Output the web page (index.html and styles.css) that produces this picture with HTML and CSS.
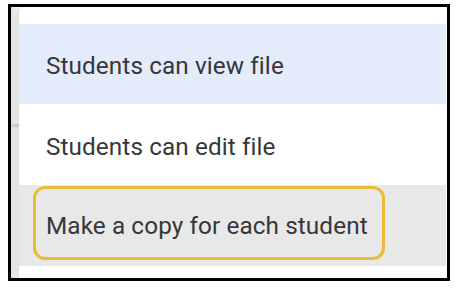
FILE: index.html
```html
<!DOCTYPE html>
<html lang="en">
<head>
  <meta charset="UTF-8" />
  <title>Share options</title>
  <link rel="stylesheet" href="styles.css">
</head>
<body>
  <div class="frame">
    <div class="backdrop">
      <span class="backdrop-line"></span>
    </div>
    <div class="menu">
      <div class="menu-item selected">Students can view file</div>
      <div class="menu-item">Students can edit file</div>
      <div class="menu-item hovered">
        <span class="highlight">Make a copy for each student</span>
      </div>
    </div>
  </div>
</body>
</html>
```

FILE: styles.css
```css
* {
  box-sizing: border-box;
  margin: 0;
  padding: 0;
}

body {
  background: #ffffff;
  font-family: Roboto, 'Liberation Sans', sans-serif;
  color: #363739;
}

.frame {
  display: flex;
  width: 442px;
  height: 277px;
  margin: 4px 0 0 8px;
  border: 3px solid #000000;
  background: #ffffff;
}

.backdrop {
  width: 8px;
  background: linear-gradient(90deg, #e2e2e2, #f1f1f1);
  padding-top: 117px;
}

.backdrop-line {
  display: block;
  height: 3px;
  background: #d2d2d2;
}

.menu {
  flex: 1;
  padding: 17px 0 11px;
  margin-right: 1px;
  border-top-left-radius: 8px;
  background: #ffffff;
  box-shadow: -2px 0 4px rgba(0, 0, 0, 0.08);
}

.menu-item {
  display: flex;
  align-items: center;
  height: 81px;
  padding: 3px 0 0 27px;
  font-size: 24.3px;
  letter-spacing: 0.1px;
}

.menu-item.selected {
  height: 80px;
  background: #e4ebfb;
}

.menu-item.hovered {
  align-items: flex-start;
  padding: 1px 0 6px 14px;
  background: #e8e8e8;
}

.highlight {
  display: flex;
  align-items: center;
  width: 352px;
  height: 74px;
  padding: 5px 0 0 10px;
  border: 3px solid #e9bd3b;
  border-radius: 12px;
}
```
